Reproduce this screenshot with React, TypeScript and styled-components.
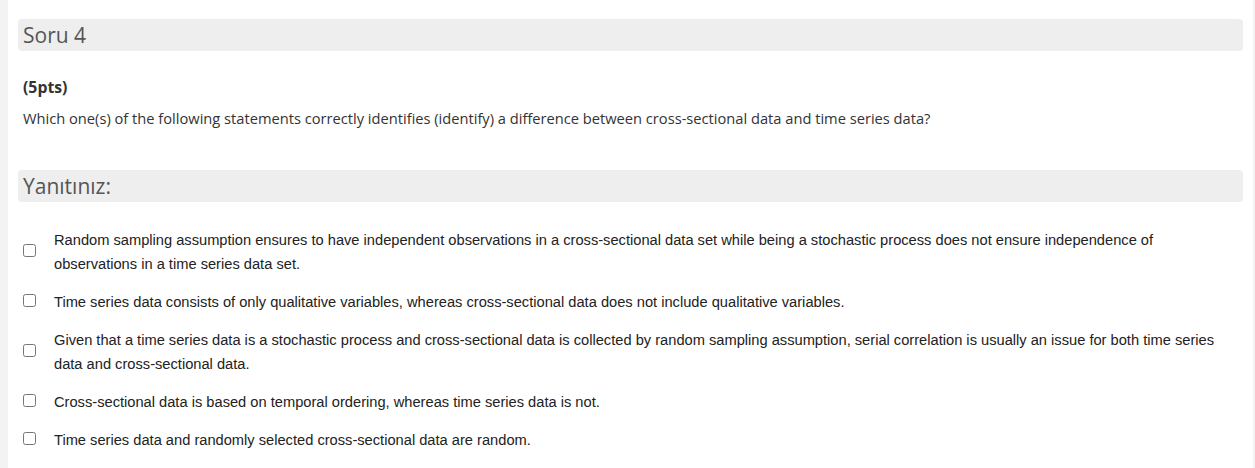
import React from "react";
import styled, { createGlobalStyle } from "styled-components";

const Global = createGlobalStyle`
  html, body { margin: 0; padding: 0; background: #fff; }
  * { box-sizing: border-box; }
`;

const Page = styled.div`
  display: flex;
  min-height: 468px;
  background: #f3f3f3;
  padding: 0 2px 0 8px;
`;

const Content = styled.main`
  flex: 1;
  background: #fff;
  padding: 19px 10px 0 10px;
  display: flex;
  flex-direction: column;
`;

const SectionBar = styled.div<{ $mt?: number }>`
  height: 32px;
  margin-top: ${(p) => p.$mt ?? 0}px;
  background: #eeeeee;
  border-radius: 4px;
  padding: 0 5px;
  display: flex;
  align-items: center;
  font-family: "Open Sans", sans-serif;
  font-size: 21px;
  color: #555;
`;

const QText = styled.p<{ $mt: number; $bold?: boolean }>`
  margin: ${(p) => p.$mt}px 0 0 5px;
  font-family: "Open Sans", sans-serif;
  font-size: ${(p) => (p.$bold ? "15.8px" : "14.66px")};
  line-height: 20px;
  color: #333;
  font-weight: ${(p) => (p.$bold ? 700 : 400)};
`;

const AnswerList = styled.ul`
  list-style: none;
  margin: 26px 15px 0 5px;
  padding: 0;
  display: flex;
  flex-direction: column;
  gap: 14px;
`;

const AnswerRow = styled.li`
  display: flex;
  align-items: center;
  gap: 18px;
`;

const Box = styled.input`
  width: 13px;
  height: 13px;
  margin: 0 0 3px 0;
  flex: none;
`;

const AnswerText = styled.label`
  font-family: "Liberation Sans", Arial, sans-serif;
  font-size: 14.66px;
  line-height: 24px;
  color: #222;
`;

const answers = [
  "Random sampling assumption ensures to have independent observations in a cross-sectional data set while being a stochastic process does not ensure independence of observations in a time series data set.",
  "Time series data consists of only qualitative variables, whereas cross-sectional data does not include qualitative variables.",
  "Given that a time series data is a stochastic process and cross-sectional data is collected by random sampling assumption, serial correlation is usually an issue for both time series data and cross-sectional data.",
  "Cross-sectional data is based on temporal ordering, whereas time series data is not.",
  "Time series data and randomly selected cross-sectional data are random.",
];

export default function App() {
  return (
    <>
      <Global />
      <Page>
        <Content>
          <SectionBar>Soru 4</SectionBar>
          <QText $mt={26} $bold>(5pts)</QText>
          <QText $mt={11}>
            Which one(s) of the following statements correctly identifies (identify) a difference between cross-sectional data and time series data?
          </QText>
          <SectionBar $mt={42}>Yanıtınız:</SectionBar>
          <AnswerList>
            {answers.map((a, i) => (
              <AnswerRow key={i}>
                <Box type="checkbox" id={`a${i}`} />
                <AnswerText htmlFor={`a${i}`}>{a}</AnswerText>
              </AnswerRow>
            ))}
          </AnswerList>
        </Content>
      </Page>
    </>
  );
}
